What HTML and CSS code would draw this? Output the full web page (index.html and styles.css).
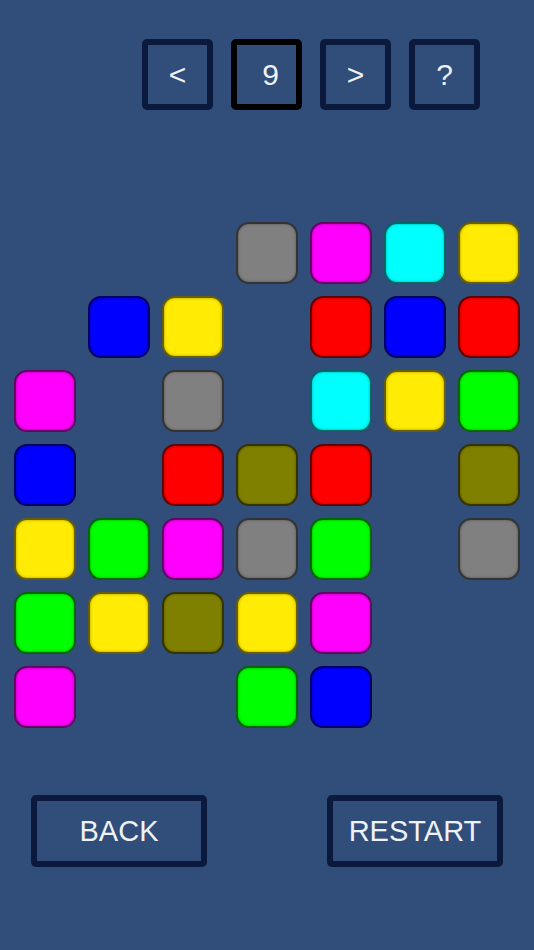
FILE: index.html
```html
<!DOCTYPE html>
<html>
<head>
<meta charset="utf-8">
<link rel="stylesheet" href="styles.css">
</head>
<body>
<div class="screen">
  <div class="topbar">
    <div class="btn sq">&lt;</div>
    <div class="btn sq selected level">9</div>
    <div class="btn sq">&gt;</div>
    <div class="btn sq">?</div>
  </div>
  <div class="board">
    <div class="cell"></div><div class="cell"></div><div class="cell"></div>
    <div class="cell t gray"></div><div class="cell t magenta"></div><div class="cell t cyan"></div><div class="cell t yellow"></div>

    <div class="cell"></div><div class="cell t blue"></div><div class="cell t yellow"></div>
    <div class="cell"></div><div class="cell t red"></div><div class="cell t blue"></div><div class="cell t red"></div>

    <div class="cell t magenta"></div><div class="cell"></div><div class="cell t gray"></div>
    <div class="cell"></div><div class="cell t cyan"></div><div class="cell t yellow"></div><div class="cell t green"></div>

    <div class="cell t blue"></div><div class="cell"></div><div class="cell t red"></div>
    <div class="cell t olive"></div><div class="cell t red"></div><div class="cell"></div><div class="cell t olive"></div>

    <div class="cell t yellow"></div><div class="cell t green"></div><div class="cell t magenta"></div>
    <div class="cell t gray"></div><div class="cell t green"></div><div class="cell"></div><div class="cell t gray"></div>

    <div class="cell t green"></div><div class="cell t yellow"></div><div class="cell t olive"></div>
    <div class="cell t yellow"></div><div class="cell t magenta"></div><div class="cell"></div><div class="cell"></div>

    <div class="cell t magenta"></div><div class="cell"></div><div class="cell"></div>
    <div class="cell t green"></div><div class="cell t blue"></div><div class="cell"></div><div class="cell"></div>
  </div>
  <div class="bottombar">
    <div class="btn wide">BACK</div>
    <div class="btn wide">RESTART</div>
  </div>
</div>
</body>
</html>
```
FILE: styles.css
```css
html, body {
  margin: 0;
  padding: 0;
  background: #314d79;
}
body {
  font-family: "Liberation Sans", Arial, sans-serif;
  color: #eef2f7;
}
.screen {
  width: 534px;
  height: 950px;
  overflow: hidden;
}
.topbar {
  display: flex;
  gap: 18px;
  padding: 39px 0 0 142px;
}
.btn {
  box-sizing: border-box;
  border: 6px solid #0b1a3c;
  border-radius: 5px;
  display: flex;
  align-items: center;
  justify-content: center;
  background: #314d79;
}
.sq {
  width: 71px;
  height: 71px;
  font-size: 30px;
}
.selected {
  border-color: #000;
}
.level {
  padding-left: 8px;
}
.board {
  display: grid;
  grid-template-columns: repeat(7, 62px);
  grid-auto-rows: 62px;
  gap: 12px;
  padding-left: 14px;
  margin-top: 112px;
}
.t {
  box-sizing: border-box;
  border-radius: 13px;
  border: 2px solid rgba(0, 0, 0, 0.6);
  background-clip: border-box;
  box-shadow: inset 0 0 3px rgba(0, 0, 0, 0.35);
}
.gray { background-color: #808080; }
.magenta { background-color: #ff00ff; }
.cyan { background-color: #00ffff; }
.yellow { background-color: #ffeb04; }
.blue { background-color: #0000ff; }
.red { background-color: #ff0000; }
.green { background-color: #00ff00; }
.olive { background-color: #808000; }
.bottombar {
  display: flex;
  justify-content: space-between;
  padding: 0 31px;
  margin-top: 67px;
}
.wide {
  width: 176px;
  height: 72px;
  font-size: 29px;
}
```
